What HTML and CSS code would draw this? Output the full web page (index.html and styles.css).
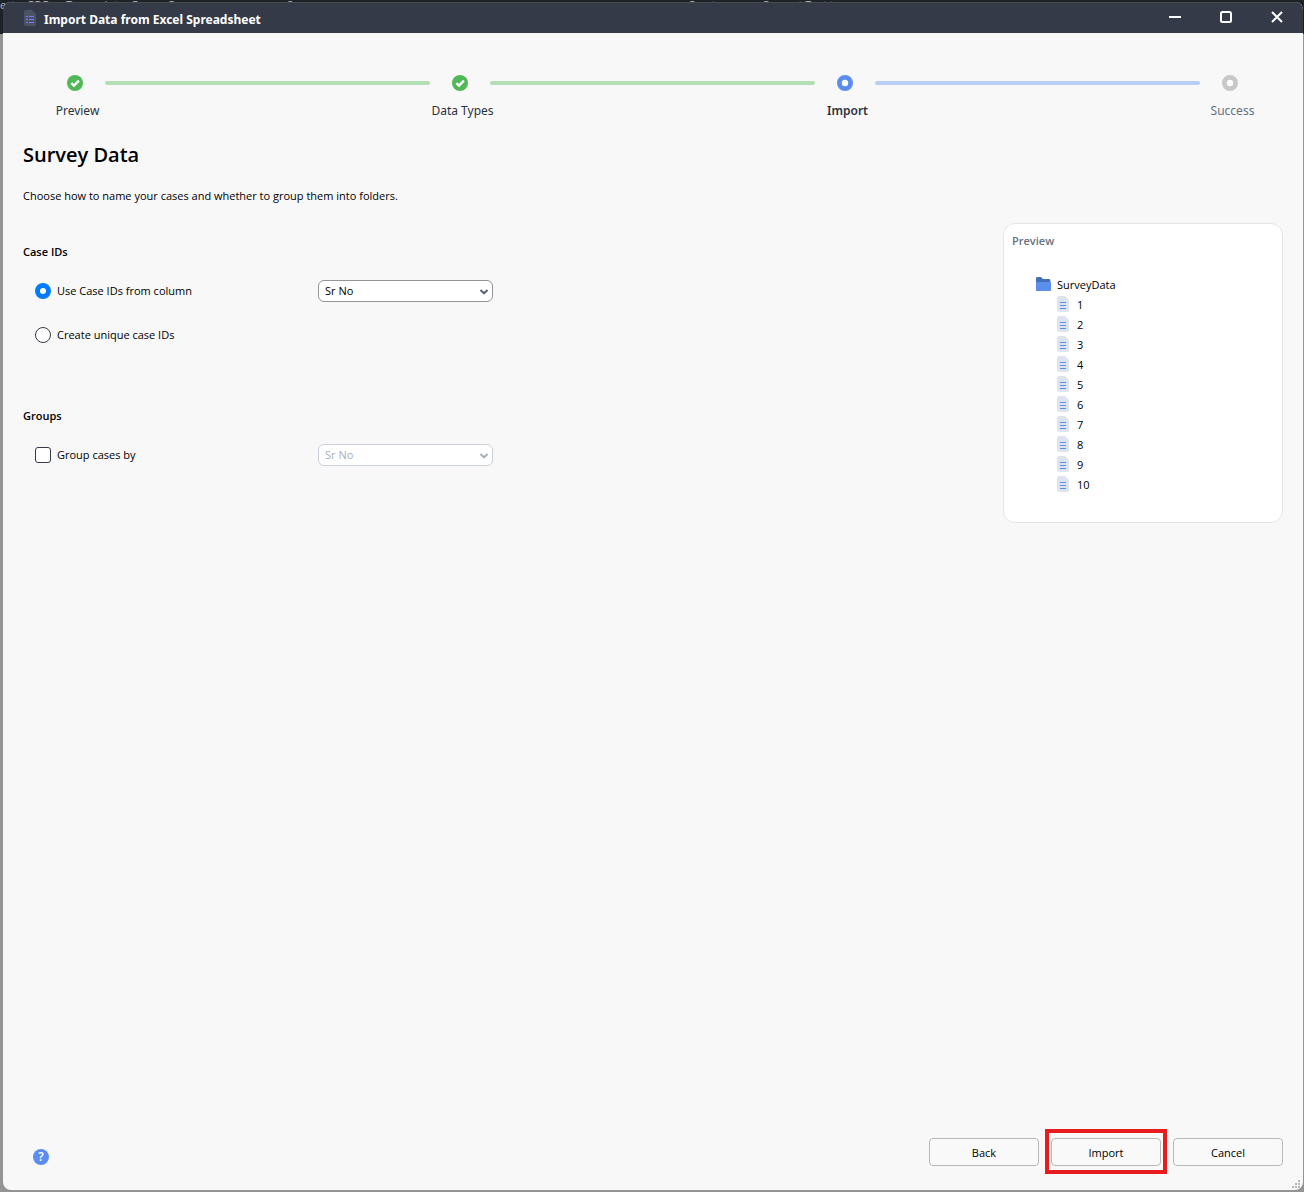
FILE: index.html
```
<!DOCTYPE html>
<html lang="en">
<head>
    <meta charset="UTF-8">
    <meta name="viewport" content="width=device-width, initial-scale=1.0">
    <title>Import Data from Excel Spreadsheet</title>
    <link rel="stylesheet" href="styles.css">
</head>
<body>
    <!-- shared icon shapes -->
    <svg class="sprite" aria-hidden="true">
        <symbol id="icon-check" viewBox="0 0 16 16">
            <circle cx="8" cy="8" r="8" fill="#51b857"/>
            <path d="M4.3 8.2l2.7 2.5 4.9-5" fill="none" stroke="#fff" stroke-width="2.4"/>
        </symbol>
        <symbol id="icon-dot" viewBox="0 0 16 16">
            <circle cx="8" cy="8" r="5.6" fill="#fff" stroke="currentColor" stroke-width="4.8"/>
        </symbol>
        <symbol id="icon-file" viewBox="0 0 12 16">
            <path d="M2 0h6l4 4v10a2 2 0 0 1-2 2H2a2 2 0 0 1-2-2V2a2 2 0 0 1 2-2z" fill="#dde4ed"/>
            <path d="M3 6.5h6M3 9.5h6M3 12.5h6" stroke="#5b8def"/>
        </symbol>
        <symbol id="icon-chevron" viewBox="0 0 8 6">
            <path d="M.5 1L4 4.3 7.5 1" fill="none" stroke="currentColor" stroke-width="2"/>
        </symbol>
    </svg>

    <!-- ribbon of the main window, mostly hidden behind the dialog -->
    <div class="backdrop" aria-hidden="true">
        <span>ects</span>
        <span>PDFs</span>
        <span>Transcripts</span>
        <span>From</span>
        <span>Groups</span>
        <span>Survey</span>
        <span>Create</span>
        <span>Convert Text to</span>
    </div>

    <div class="window">
        <header class="titlebar">
            <svg class="app-icon" viewBox="0 0 12 16">
                <path d="M2 0h6l4 4v10a2 2 0 0 1-2 2H2a2 2 0 0 1-2-2V2a2 2 0 0 1 2-2z" fill="#4a5467"/>
                <path d="M2 6.5h2M5 6.5h5M2 9.5h2M5 9.5h5M2 12.5h2M5 12.5h5" stroke="#8075f5"/>
            </svg>
            <span class="title">Import Data from Excel Spreadsheet</span>
            <div class="window-buttons">
                <button type="button" aria-label="Minimize">
                    <svg viewBox="0 0 12 12"><path d="M0 6h12" stroke-width="2"/></svg>
                </button>
                <button type="button" aria-label="Maximize">
                    <svg viewBox="0 0 12 12"><rect x="1" y="1" width="10" height="10" rx="1.5" stroke-width="2"/></svg>
                </button>
                <button type="button" aria-label="Close">
                    <svg viewBox="0 0 12 12"><path d="M1 1l10 10M11 1L1 11" stroke-width="2"/></svg>
                </button>
            </div>
        </header>

        <ol class="stepper">
            <li class="step">
                <svg><use href="#icon-check"/></svg>
                <span class="step-label">Preview</span>
            </li>
            <li class="connector done" role="presentation"></li>
            <li class="step">
                <svg><use href="#icon-check"/></svg>
                <span class="step-label">Data Types</span>
            </li>
            <li class="connector done" role="presentation"></li>
            <li class="step current" aria-current="step">
                <svg><use href="#icon-dot"/></svg>
                <span class="step-label">Import</span>
            </li>
            <li class="connector" role="presentation"></li>
            <li class="step pending">
                <svg><use href="#icon-dot"/></svg>
                <span class="step-label">Success</span>
            </li>
        </ol>

        <main>
            <h1>Survey Data</h1>
            <p class="intro">Choose how to name your cases and whether to group them into folders.</p>

            <div class="columns">
                <form class="options">
                    <h2>Case IDs</h2>
                    <div class="option">
                        <label><input type="radio" name="case-id" checked>Use Case IDs from column</label>
                        <div class="select">
                            <select aria-label="Case ID column">
                                <option>Sr No</option>
                            </select>
                            <svg><use href="#icon-chevron"/></svg>
                        </div>
                    </div>
                    <div class="option">
                        <label><input type="radio" name="case-id">Create unique case IDs</label>
                    </div>

                    <h2 class="groups">Groups</h2>
                    <div class="option">
                        <label><input type="checkbox" name="group">Group cases by</label>
                        <div class="select disabled">
                            <select aria-label="Group column" disabled>
                                <option>Sr No</option>
                            </select>
                            <svg><use href="#icon-chevron"/></svg>
                        </div>
                    </div>
                </form>

                <aside class="preview">
                    <h2>Preview</h2>
                    <div class="folder">
                        <svg viewBox="0 0 15 14">
                            <path d="M0 1.5C0 .7.6 0 1.4 0H5l2 2h6c.8 0 1.3.6 1.3 1.4V14H0z" fill="#4470ba"/>
                            <path d="M1.5 5H15v7.6c0 .8-.6 1.4-1.4 1.4H0V6.4C0 5.6.7 5 1.5 5z" fill="#5b8fec"/>
                        </svg>
                        SurveyData
                    </div>
                    <ul class="cases">
                        <li><svg><use href="#icon-file"/></svg>1</li>
                        <li><svg><use href="#icon-file"/></svg>2</li>
                        <li><svg><use href="#icon-file"/></svg>3</li>
                        <li><svg><use href="#icon-file"/></svg>4</li>
                        <li><svg><use href="#icon-file"/></svg>5</li>
                        <li><svg><use href="#icon-file"/></svg>6</li>
                        <li><svg><use href="#icon-file"/></svg>7</li>
                        <li><svg><use href="#icon-file"/></svg>8</li>
                        <li><svg><use href="#icon-file"/></svg>9</li>
                        <li><svg><use href="#icon-file"/></svg>10</li>
                    </ul>
                </aside>
            </div>
        </main>

        <footer>
            <button type="button" class="help" aria-label="Help">?</button>
            <div class="actions">
                <button type="button">Back</button>
                <button type="button" class="highlighted">Import</button>
                <button type="button">Cancel</button>
            </div>
        </footer>

        <svg class="grip" viewBox="0 0 8 8" aria-hidden="true">
            <path d="M6 0h2v2H6zM3 3h2v2H3zM6 3h2v2H6zM0 6h2v2H0zM3 6h2v2H3zM6 6h2v2H6z" fill="#b8b8b8"/>
        </svg>
    </div>
</body>
</html>
```
FILE: styles.css
```
* {
    box-sizing: border-box;
}
body {
    margin: 0;
    padding: 2px 1px 2px 3px;
    min-height: 100vh;
    display: flex;
    background: #949494;
    color: #000;
    font-family: "Open Sans", "Noto Sans", sans-serif;
    font-size: 11px;
    line-height: 20px;
}
h1, h2, p, ol, ul {
    margin: 0;
    padding: 0;
}
ol, ul {
    list-style: none;
}
button, select {
    font: inherit;
    color: inherit;
}
.sprite {
    position: absolute;
    width: 0;
    height: 0;
}
.backdrop {
    position: absolute;
    top: 0;
    left: 0;
    right: 0;
    height: 34px;
    display: grid;
    grid-template-columns: 28px 38px 66px 35px 120px 401px 74px 1fr;
    background: #1d2229;
    color: #b5b8bc;
    line-height: 10px;
    white-space: nowrap;
    overflow: hidden;
}
.window {
    position: relative;
    flex: 1;
    display: flex;
    flex-direction: column;
    background: #f8f8f8;
    border-radius: 8px;
    overflow: hidden;
}

/* title bar */
.titlebar {
    display: flex;
    align-items: center;
    height: 31px;
    padding: 0 20px 0 21px;
    background: #343a47;
    border-top: 1px solid #4a4a4d;
    color: #fff;
}
.app-icon {
    width: 12px;
    height: 16px;
    margin-right: 8px;
}
.title {
    padding-top: 3px;
    font-family: "Noto Sans", sans-serif;
    font-size: 12px;
    font-weight: bold;
}
.window-buttons {
    display: flex;
    gap: 39px;
    margin-left: auto;
}
.window-buttons button {
    display: flex;
    padding: 0 0 2px;
    border: 0;
    background: none;
}
.window-buttons svg {
    width: 12px;
    height: 12px;
    fill: none;
    stroke: #fff;
}

/* steps */
.stepper {
    display: flex;
    padding: 42px 43px 0 42px;
    font-family: "Noto Sans", sans-serif;
    font-size: 12px;
    color: #2b323d;
}
.step {
    display: flex;
    flex-direction: column;
    align-items: center;
    gap: 10px;
    width: 60px;
}
.step svg {
    width: 16px;
    height: 16px;
}
.step-label {
    padding-left: 5px;
    white-space: nowrap;
}
.step.current svg {
    color: #5b8def;
}
.step.current .step-label {
    font-weight: 600;
}
.step.pending svg {
    color: #c8c8c8;
}
.step.pending .step-label {
    color: #667180;
}
.connector {
    flex: 1;
    height: 4px;
    margin-top: 6px;
    border-radius: 2px;
    background: #b8cef5;
}
.connector.done {
    background: #b2dfb4;
}

/* content */
main {
    flex: 1;
    padding: 20px 20px 0;
}
h1 {
    font-size: 20px;
    line-height: 28px;
    font-weight: 600;
}
h2 {
    font-size: 11px;
    font-weight: 600;
    line-height: 20px;
}
.intro {
    margin-top: 17px;
}
.columns {
    display: flex;
    justify-content: space-between;
    margin-top: 17px;
}
.options {
    padding-top: 19px;
}
.groups {
    margin-top: 60px;
}
.option {
    display: grid;
    grid-template-columns: 295px 175px;
    align-items: center;
    height: 22px;
    margin-top: 18px;
}
.option + .option {
    margin-top: 22px;
}
.option label {
    display: flex;
    align-items: center;
    gap: 6px;
    padding-left: 12px;
}
.option input {
    appearance: none;
    width: 16px;
    height: 16px;
    margin: 0;
    border: 1px solid #343a47;
    background: #fff;
}
.option input[type="radio"] {
    border-radius: 50%;
}
.option input[type="radio"]:checked {
    border: 5px solid #007bff;
}
.option input[type="checkbox"] {
    border-radius: 3px;
}
.select {
    position: relative;
    color: #000;
}
.select select {
    appearance: none;
    display: block;
    width: 100%;
    height: 22px;
    padding: 0 6px;
    border: 1px solid #949599;
    border-radius: 6px;
    background: #fff;
    opacity: 1;
}
.select svg {
    position: absolute;
    top: 9px;
    right: 5px;
    width: 8px;
    height: 6px;
    color: #5c6675;
    pointer-events: none;
}
.select.disabled {
    color: #a7b0bb;
}
.select.disabled select {
    border-color: #cbd1d8;
}
.select.disabled svg {
    color: #a7b0bb;
}

/* preview card */
.preview {
    width: 280px;
    min-height: 300px;
    padding: 7px 8px;
    border: 1px solid #e4e4e4;
    border-radius: 12px;
    background: #fff;
}
.preview h2 {
    color: #667180;
}
.folder {
    display: flex;
    align-items: center;
    gap: 6px;
    margin-top: 24px;
    padding-left: 24px;
}
.folder svg {
    width: 15px;
    height: 14px;
    margin-bottom: 2px;
}
.cases {
    padding-left: 45px;
}
.cases li {
    display: flex;
    align-items: center;
    gap: 8px;
}
.cases svg {
    width: 12px;
    height: 16px;
    margin-bottom: 2px;
}

/* footer */
footer {
    display: flex;
    justify-content: space-between;
    align-items: center;
    padding: 0 20px 24px 30px;
}
.help {
    width: 16px;
    height: 16px;
    margin-top: 10px;
    padding: 0;
    border: 0;
    border-radius: 50%;
    background: #5b8def;
    color: #fff;
    font-size: 12px;
    font-weight: 600;
    line-height: 16px;
}
.actions {
    display: flex;
    gap: 12px;
}
.actions button {
    position: relative;
    width: 110px;
    height: 28px;
    padding: 2px 0 0;
    border: 1px solid #b9b9b9;
    border-radius: 4px;
    background: #f9f9f9;
}
.actions .highlighted::after {
    content: "";
    position: absolute;
    inset: -10px -7px -9px;
    border: 4px solid #e81b1d;
}
.grip {
    position: absolute;
    right: 3px;
    bottom: 2px;
    width: 8px;
    height: 8px;
}
```
